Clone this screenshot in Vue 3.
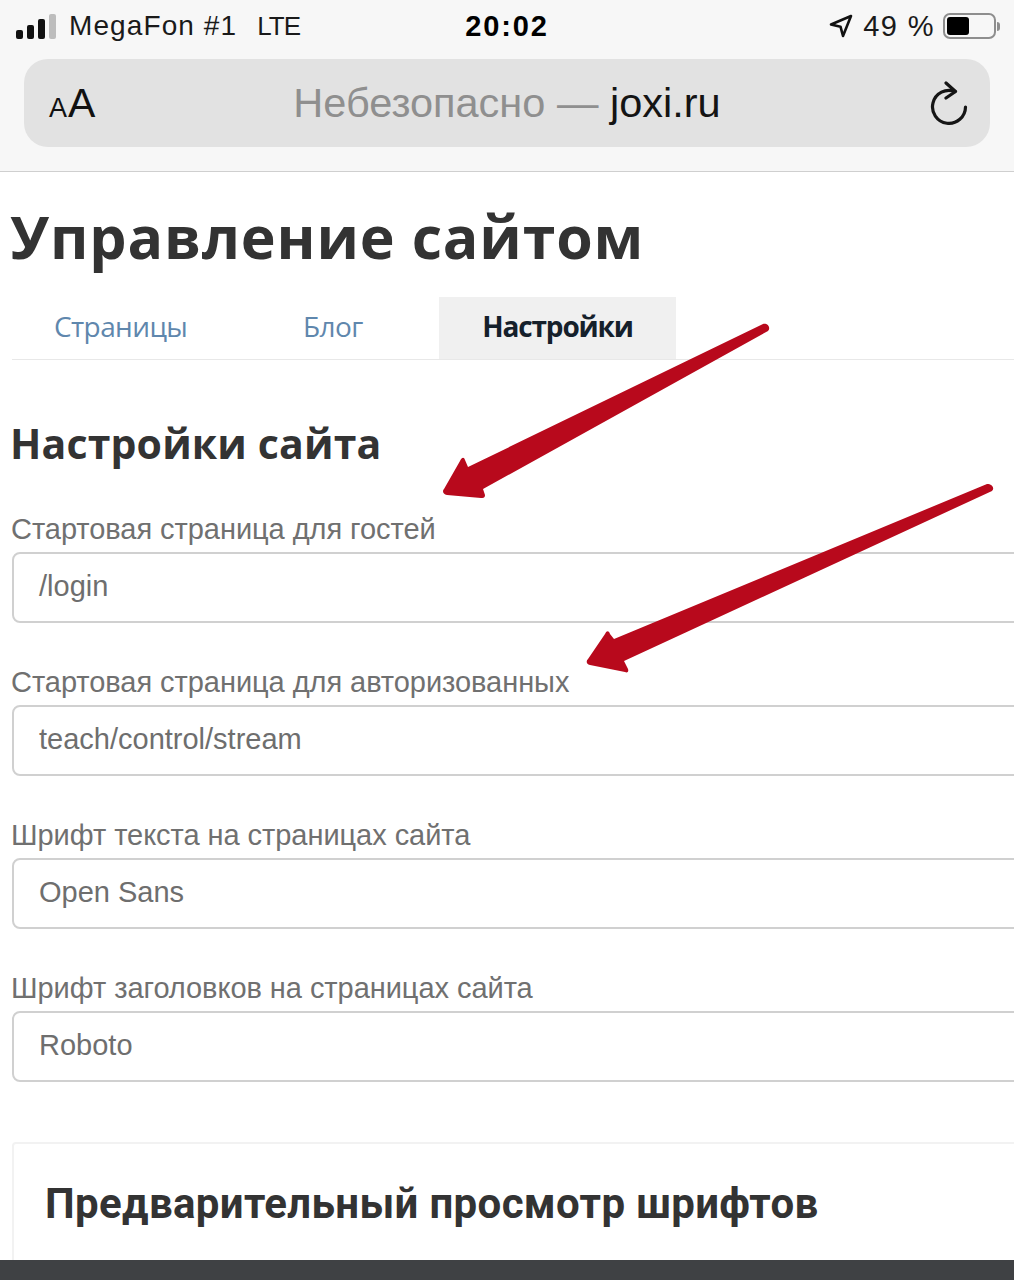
<script setup>
const fields = [
  { label: 'Стартовая страница для гостей', value: '/login' },
  { label: 'Стартовая страница для авторизованных', value: 'teach/control/stream' },
  { label: 'Шрифт текста на страницах сайта', value: 'Open Sans' },
  { label: 'Шрифт заголовков на страницах сайта', value: 'Roboto' },
]
</script>

<template>
  <div class="screen">
    <header class="browser">
      <div class="status">
        <div class="status-left">
          <span class="signal"><i class="b1"></i><i class="b2"></i><i class="b3"></i><i class="b4"></i></span>
          <span class="carrier">MegaFon #1</span>
          <span class="lte">LTE</span>
        </div>
        <div class="clock">20:02</div>
        <div class="status-right">
          <svg class="loc" viewBox="0 0 24 24" width="24" height="24"><path d="M22 2 2 10.5l9.5 2.2L14 22z" fill="none" stroke="#111" stroke-width="2.6" stroke-linejoin="round"/></svg>
          <span class="pct">49 %</span>
          <span class="battery"><span class="level"></span></span>
          <span class="nub"></span>
        </div>
      </div>
      <div class="urlbar">
        <span class="aa"><small>A</small>A</span>
        <span class="url"><span class="muted">Небезопасно —</span> joxi.ru</span>
        <svg class="reload" viewBox="0 0 40 44" width="40" height="44"><path d="M26 10.5A16.5 16.5 0 1 0 36.5 26" fill="none" stroke="#151515" stroke-width="3.2" stroke-linecap="round"/><path d="M17 2l9.5 8.5L17 17" fill="none" stroke="#151515" stroke-width="3.2" stroke-linecap="round" stroke-linejoin="round"/></svg>
      </div>
    </header>

    <main class="page">
      <h1>Управление сайтом</h1>
      <nav class="tabs">
        <a class="tab t1">Страницы</a>
        <a class="tab t2">Блог</a>
        <a class="tab active">Настройки</a>
      </nav>
      <h2>Настройки сайта</h2>
      <div class="fields">
        <div v-for="f in fields" :key="f.label" class="field">
          <label>{{ f.label }}</label>
          <div class="input">{{ f.value }}</div>
        </div>
      </div>
      <section class="card">
        <h3>Предварительный просмотр шрифтов</h3>
      </section>
    </main>

    <div class="bottom"></div>

    <svg class="arrows" viewBox="0 0 1014 1280" width="1014" height="1280">
      <path class="arrow" d="M763 324 C768 323 771 328 768 331 L483 489 L485 495 C485 498 483 498 481 498 L447 495 C443 494 442 491 444 489 L460 461 C462 457 464 457 465 460 L468 467 Z"/>
      <path class="arrow" d="M987 484 C992 484 995 488 992 491 L624 661 L628 669 C629 672 627 673 625 672 L590 665 C586 664 586 661 588 659 L605 634 C607 630 609 631 610 634 L614 639 Z"/>
    </svg>
  </div>
</template>

<style>
html, body { margin: 0; background: #fff; }
</style>

<style scoped>
.screen { position: relative; width: 1014px; height: 1280px; overflow: hidden; background: #fff; font-family: "Liberation Sans", Arial, sans-serif; }
.browser { height: 171px; background: #f7f7f7; border-bottom: 1px solid #cfcfcf; }
.status { display: flex; align-items: center; justify-content: space-between; height: 52px; padding: 0 14px 0 16px; position: relative; color: #1a1a1a; }
.status-left { display: flex; align-items: center; }
.signal { display: flex; align-items: flex-end; gap: 4px; height: 25px; margin-right: 13px; }
.signal i { display: block; width: 7px; background: #111; border-radius: 2px; }
.b1 { height: 9px; } .b2 { height: 14px; } .b3 { height: 20px; }
.signal .b4 { height: 25px; background: #bdbdbd; }
.carrier { font-size: 28px; letter-spacing: 1.1px; }
.lte { font-size: 26px; margin-left: 20px; letter-spacing: -.9px; }
.clock { position: absolute; left: 0; right: 0; text-align: center; font-size: 29px; font-weight: 700; color: #000; letter-spacing: 1.9px; }
.status-right { display: flex; align-items: center; }
.loc { margin-right: 10px; }
.pct { font-size: 29px; margin-right: 8px; letter-spacing: 1.4px; }
.battery { flex: none; display: flex; width: 53px; height: 26px; padding: 2px; box-sizing: border-box; border: 2px solid #8e8e8e; border-radius: 7px; }
.level { width: 22px; background: #000; border-radius: 3px; }
.nub { width: 3px; height: 9px; background: #8e8e8e; border-radius: 0 3px 3px 0; margin-left: 1px; }
.urlbar { position: relative; display: flex; align-items: center; justify-content: center; height: 88px; margin: 7px 24px 0; border-radius: 24px; background: #e2e2e2; }
.aa { position: absolute; left: 25px; color: #111; font-size: 41px; line-height: 1; }
.aa small { font-size: 27px; margin-right: 1px; }
.url { font-size: 41.5px; color: #141414; }
.muted { color: #8f8f8f; }
.reload { position: absolute; right: 21px; top: 22px; }

.page { padding: 0 0 0 12px; }
h1 { margin: 28px 0 0 -2px; font-family: "Open Sans", sans-serif; font-size: 59px; line-height: 72px; font-weight: 700; color: #333; letter-spacing: .85px; }
.tabs { display: flex; height: 63px; margin-top: 25px; box-sizing: border-box; border-bottom: 1px solid #e8e8e8; font-size: 28px; font-family: "Open Sans", sans-serif; letter-spacing: -.6px; }
.tab { display: flex; align-items: center; justify-content: center; padding-bottom: 5px; box-sizing: border-box; color: #5f87ad; }
.t1 { width: 217px; justify-content: flex-start; padding-left: 42px; }
.t2 { width: 210px; justify-content: flex-start; padding-left: 74px; }
.active { width: 237px; background: #f0f0f0; color: #15202b; font-weight: 700; letter-spacing: -1.15px; }
h2 { margin: 57px 0 0 -2px; font-family: "Open Sans", sans-serif; font-size: 41px; line-height: 52px; font-weight: 700; color: #333; letter-spacing: .15px; }
.fields { display: flex; flex-direction: column; gap: 41px; margin-top: 42px; }
label { display: block; height: 34px; line-height: 37px; margin-left: -1px; font-size: 29px; color: #707070; white-space: nowrap; letter-spacing: -.05px; }
.input { width: 1040px; height: 71px; box-sizing: border-box; margin-top: 7px; padding-left: 25px; border: 2px solid #d0d0d0; border-radius: 8px; line-height: 65px; font-size: 29px; color: #6e6e6e; }
.card { width: 1040px; height: 140px; margin-top: 60px; padding: 36px 31px; box-sizing: border-box; border: 2px solid #f2f2f2; border-radius: 4px; }
h3 { margin: 0; font-family: Roboto, sans-serif; font-size: 42px; line-height: 48px; font-weight: 700; color: #333; white-space: nowrap; letter-spacing: .35px; }
.bottom { position: absolute; left: 0; right: 0; bottom: 0; height: 20px; background: #3f4144; }
.arrows { position: absolute; left: 0; top: 0; pointer-events: none; }
.arrow { fill: #b8091c; }
</style>
